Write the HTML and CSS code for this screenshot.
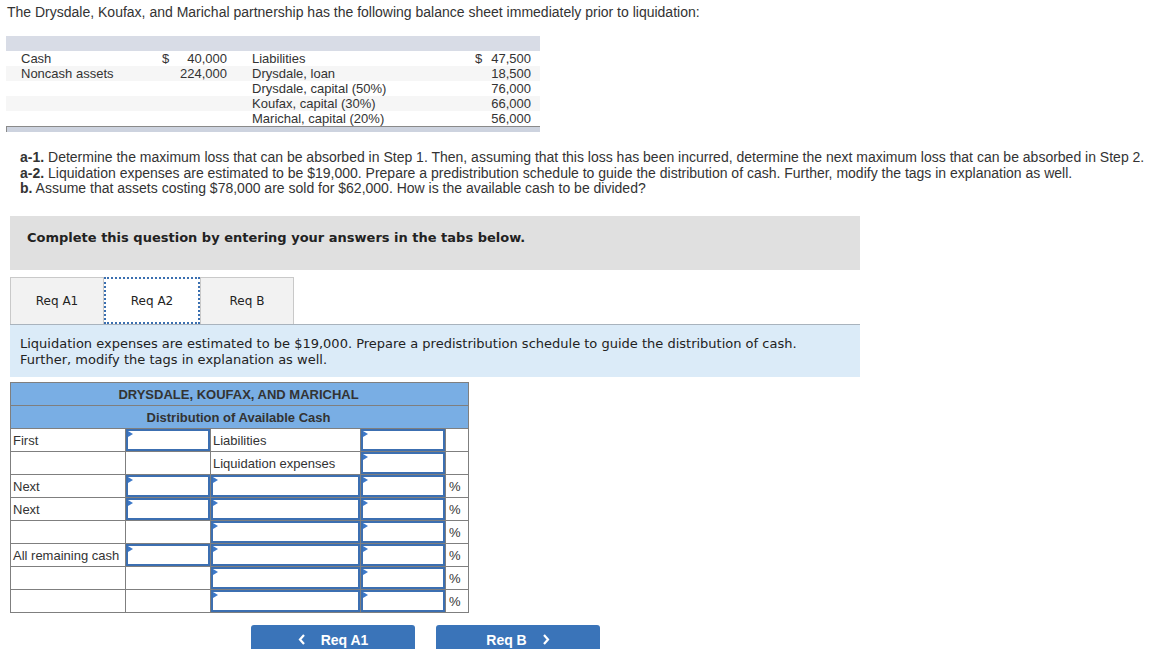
FILE: index.html
```html
<!DOCTYPE html>
<html>
<head>
<meta charset="utf-8">
<link rel="stylesheet" href="styles.css">
</head>
<body>
<div class="page">
  <p class="intro">The Drysdale, Koufax, and Marichal partnership has the following balance sheet immediately prior to liquidation:</p>

  <table class="bs">
    <colgroup>
      <col class="c1"><col class="c2"><col class="c3"><col class="c4"><col class="c5"><col class="c6">
    </colgroup>
    <tr class="bs-head"><td colspan="6"></td></tr>
    <tr><td class="lbl">Cash</td><td class="dol">$</td><td class="amt">40,000</td><td class="lbl2">Liabilities</td><td class="dol2">$</td><td class="amt2">47,500</td></tr>
    <tr class="alt"><td class="lbl">Noncash assets</td><td class="dol"></td><td class="amt">224,000</td><td class="lbl2">Drysdale, loan</td><td class="dol2"></td><td class="amt2">18,500</td></tr>
    <tr><td class="lbl"></td><td class="dol"></td><td class="amt"></td><td class="lbl2">Drysdale, capital (50%)</td><td class="dol2"></td><td class="amt2">76,000</td></tr>
    <tr class="alt"><td class="lbl"></td><td class="dol"></td><td class="amt"></td><td class="lbl2">Koufax, capital (30%)</td><td class="dol2"></td><td class="amt2">66,000</td></tr>
    <tr><td class="lbl"></td><td class="dol"></td><td class="amt"></td><td class="lbl2">Marichal, capital (20%)</td><td class="dol2"></td><td class="amt2">56,000</td></tr>
  </table>
  <div class="bs-foot"></div>

  <div class="questions">
    <div><b>a-1.</b> Determine the maximum loss that can be absorbed in Step 1. Then, assuming that this loss has been incurred, determine the next maximum loss that can be absorbed in Step 2.</div>
    <div><b>a-2.</b> Liquidation expenses are estimated to be $19,000. Prepare a predistribution schedule to guide the distribution of cash. Further, modify the tags in explanation as well.</div>
    <div><b>b.</b> Assume that assets costing $78,000 are sold for $62,000. How is the available cash to be divided?</div>
  </div>

  <div class="complete">Complete this question by entering your answers in the tabs below.</div>

  <div class="tabs">
    <div class="tab">Req A1</div>
    <div class="tab active">Req A2</div>
    <div class="tab">Req B</div>
  </div>

  <div class="info">Liquidation expenses are estimated to be $19,000. Prepare a predistribution schedule to guide the distribution of cash.<br>Further, modify the tags in explanation as well.</div>

  <table class="dist">
    <colgroup>
      <col class="d1"><col class="d2"><col class="d3"><col class="d4"><col class="d5">
    </colgroup>
    <tr class="h1"><th colspan="5">DRYSDALE, KOUFAX, AND MARICHAL</th></tr>
    <tr class="h2"><th colspan="5">Distribution of Available Cash</th></tr>
    <tr>
      <td class="txt">First</td>
      <td class="in"><div class="box"><span class="mark"></span></div></td>
      <td class="txt">Liabilities</td>
      <td class="in"><div class="box"><span class="mark"></span></div></td>
      <td class="pct"></td>
    </tr>
    <tr>
      <td class="txt"></td>
      <td class="in"></td>
      <td class="txt">Liquidation expenses</td>
      <td class="in"><div class="box"><span class="mark"></span></div></td>
      <td class="pct"></td>
    </tr>
    <tr>
      <td class="txt">Next</td>
      <td class="in"><div class="box"><span class="mark"></span></div></td>
      <td class="in"><div class="box"><span class="mark"></span></div></td>
      <td class="in"><div class="box"><span class="mark"></span></div></td>
      <td class="pct">%</td>
    </tr>
    <tr>
      <td class="txt">Next</td>
      <td class="in"><div class="box"><span class="mark"></span></div></td>
      <td class="in"><div class="box"><span class="mark"></span></div></td>
      <td class="in"><div class="box"><span class="mark"></span></div></td>
      <td class="pct">%</td>
    </tr>
    <tr>
      <td class="txt"></td>
      <td class="in"></td>
      <td class="in"><div class="box"><span class="mark"></span></div></td>
      <td class="in"><div class="box"><span class="mark"></span></div></td>
      <td class="pct">%</td>
    </tr>
    <tr>
      <td class="txt">All remaining cash</td>
      <td class="in"><div class="box"><span class="mark"></span></div></td>
      <td class="in"><div class="box"><span class="mark"></span></div></td>
      <td class="in"><div class="box"><span class="mark"></span></div></td>
      <td class="pct">%</td>
    </tr>
    <tr>
      <td class="txt"></td>
      <td class="in"></td>
      <td class="in"><div class="box"><span class="mark"></span></div></td>
      <td class="in"><div class="box"><span class="mark"></span></div></td>
      <td class="pct">%</td>
    </tr>
    <tr>
      <td class="txt"></td>
      <td class="in"></td>
      <td class="in"><div class="box"><span class="mark"></span></div></td>
      <td class="in"><div class="box"><span class="mark"></span></div></td>
      <td class="pct">%</td>
    </tr>
  </table>

  <div class="nav">
    <div class="btn"><svg class="chev" width="8" height="11" viewBox="0 0 8 11"><path d="M6 1 L2 5.5 L6 10" fill="none" stroke="#fff" stroke-width="2.2"/></svg><span>Req A1</span></div>
    <div class="btn"><span>Req B</span><svg class="chev" width="8" height="11" viewBox="0 0 8 11"><path d="M2 1 L6 5.5 L2 10" fill="none" stroke="#fff" stroke-width="2.2"/></svg></div>
  </div>
</div>
</body>
</html>
```

FILE: styles.css
```css
html, body {
  margin: 0;
  padding: 0;
  background: #fff;
}
.page {
  font-family: "Liberation Sans", Arial, sans-serif;
  color: #333;
  font-size: 13px;
}
.intro {
  margin: 0;
  padding: 4px 0 0 7px;
  line-height: 16px;
  font-size: 14px;
}

/* balance sheet */
.bs {
  margin: 16px 0 0 6px;
  border-collapse: collapse;
  table-layout: fixed;
  width: 534px;
  font-size: 13px;
  color: #333;
}
.bs td {
  padding: 0;
  height: 15px;
  line-height: 15px;
  white-space: nowrap;
}
.bs .c1 { width: 149px; }
.bs .c2 { width: 15px; }
.bs .c3 { width: 62px; }
.bs .c4 { width: 238px; }
.bs .c5 { width: 15px; }
.bs .c6 { width: 55px; }
.bs-head td { background: #d8dce6; }
.bs .alt td { background: #f6f6f6; }
.bs .lbl { padding-left: 15px; }
.bs .dol { padding-left: 7px; }
.bs .amt { text-align: right; padding-right: 5px; }
.bs .lbl2 { padding-left: 20px; }
.bs .dol2 { padding-left: 5px; }
.bs .amt2 { text-align: right; padding-right: 9px; }
.bs-foot {
  margin-left: 6px;
  width: 533px;
  height: 5px;
  background: #cdd3df;
  border-top: 1px solid #8a8a8a;
  border-left: 1px solid #8a8a8a;
}

/* questions */
.questions {
  margin: 18px 0 0 20px;
  line-height: 15.5px;
  font-size: 14px;
  color: #333;
}

/* complete box */
.complete {
  margin: 19.5px 0 0 10px;
  width: 833px;
  height: 40px;
  padding: 14px 0 0 17px;
  background: #e0e0e0;
  font-family: "DejaVu Sans", Verdana, sans-serif;
  font-weight: bold;
  font-size: 13px;
  line-height: 16px;
  color: #222;
}

/* tabs */
.tabs {
  display: flex;
  margin: 7px 0 0 10px;
  height: 47px;
}
.tab {
  box-sizing: border-box;
  width: 94px;
  height: 47px;
  background: #f2f2f2;
  border: 1px solid #c9c9c9;
  border-bottom: none;
  display: flex;
  align-items: center;
  justify-content: center;
  font-family: "DejaVu Sans", Verdana, sans-serif;
  font-size: 12px;
  color: #222;
}
.tab.active {
  width: 96px;
  background: #fff;
  border: 2px dotted #3a6fb0;
}

.info {
  margin-left: 10px;
  width: 840px;
  height: 41px;
  padding: 11px 0 0 10px;
  background: #dbebf8;
  border-top: 1px solid #a9b3bd;
  font-family: "DejaVu Sans", Verdana, sans-serif;
  font-size: 13px;
  line-height: 16px;
  color: #222;
}

/* distribution table */
.dist {
  margin: 5px 0 0 10px;
  border-collapse: collapse;
  table-layout: fixed;
  width: 459px;
  font-size: 13px;
  color: #333;
}
.dist .d1 { width: 115px; }
.dist .d2 { width: 85px; }
.dist .d3 { width: 150px; }
.dist .d4 { width: 85px; }
.dist .d5 { width: 23px; }
.dist th {
  background: #79aee4;
  border: 1px solid #7f7f7f;
  font-weight: bold;
  font-size: 13px;
  height: 22px;
  padding: 0 2px 0 0;
  color: #333;
  text-align: center;
}
.dist td {
  border: 1px solid #7f7f7f;
  height: 22px;
  padding: 0;
  white-space: nowrap;
}
.dist .txt { padding-left: 2px; }
.dist .pct { text-align: left; padding-left: 3px; }
.dist .in { position: relative; }
.box {
  position: relative;
  box-sizing: border-box;
  height: 22px;
  border: 2px solid #3c6fb1;
  background: #fff;
}
.mark {
  position: absolute;
  top: 0;
  left: 0;
  width: 0;
  height: 0;
  border-top: 3px solid transparent;
  border-bottom: 3px solid transparent;
  border-left: 5px solid #3c78c8;
}

/* nav buttons */
.nav {
  display: flex;
  gap: 21px;
  margin: 12px 0 0 251px;
}
.btn {
  width: 164px;
  height: 30px;
  background: #3a74b9;
  border-radius: 3px 3px 0 0;
  color: #fff;
  font-weight: bold;
  font-size: 14px;
  display: flex;
  align-items: flex-start;
  justify-content: center;
  gap: 15px;
  padding-top: 7px;
  box-sizing: border-box;
}
.chev { margin-top: 2px; }
```
